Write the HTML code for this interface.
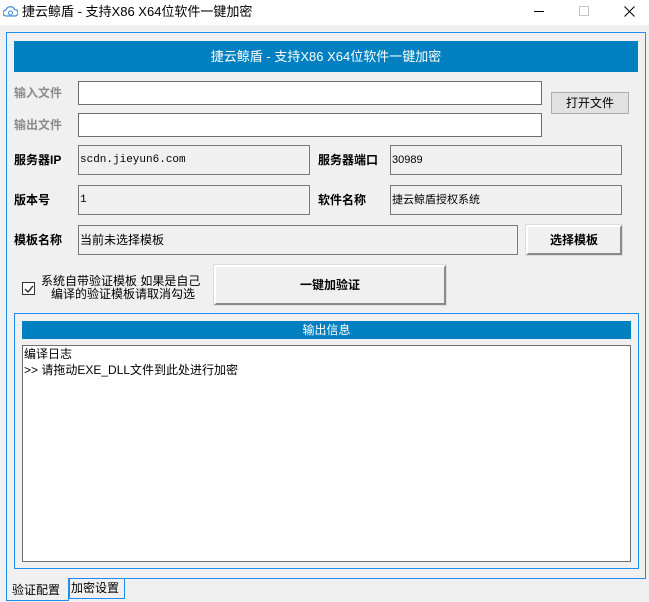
<!DOCTYPE html>
<html><head><meta charset="utf-8"><style>
*{margin:0;padding:0;box-sizing:border-box}
body{width:649px;height:602px;background:#f0f0f0;position:relative;overflow:hidden;font-family:"Liberation Sans","Noto Sans CJK SC",sans-serif;font-size:12px;color:#000}
.a{position:absolute}
.lbl{font-weight:bold;font-size:12px;line-height:14px}
.fld{border:1px solid #7a7a7a;background:#f0f0f0;font-size:11px;padding-left:1px;font-family:"Liberation Mono","Noto Sans CJK SC",monospace}
.inp{border:1px solid #6e6e6e;background:#fff}
.btn3d{background:#f0f0f0;border-top:2px solid #fff;border-left:2px solid #fff;border-right:2px solid #8a8a8a;border-bottom:2px solid #8a8a8a;outline:1px solid #dcdcdc;font-weight:bold;text-align:center}
</style></head><body>
<div class="a" style="left:0;top:0;width:649px;height:25px;background:#fff"></div>
<svg class="a" style="left:3px;top:5px" width="15" height="14" viewBox="0 0 15 14"><path d="M3 11 A3 3 0 0 1 3 5 A4.5 4.5 0 0 1 11.5 4.5 A3.2 3.2 0 0 1 12 11 Z" fill="none" stroke="#4a8fd8" stroke-width="1.3"/><circle cx="7.5" cy="8" r="2" fill="none" stroke="#4a8fd8" stroke-width="1.1"/></svg>
<div class="a" style="left:22px;top:4px;font-size:13px;line-height:16px">捷云鲸盾 - 支持X86 X64位软件一键加密</div>
<div class="a" style="left:534px;top:11px;width:10px;height:1px;background:#000"></div>
<div class="a" style="left:579px;top:6px;width:10px;height:10px;border:1px solid #c8c8c8"></div>
<svg class="a" style="left:624px;top:6px" width="11" height="11"><path d="M0.5 0.5L10.5 10.5M10.5 0.5L0.5 10.5" stroke="#000" stroke-width="1"/></svg>

<div class="a" style="left:6px;top:32px;width:640px;height:547px;border:1px solid #1e8cf0"></div>
<div class="a" style="left:14px;top:41px;width:624px;height:31px;background:#0080c0;color:#fff;text-align:center;line-height:31px;font-size:13px">捷云鲸盾 - 支持X86 X64位软件一键加密</div>

<div class="a lbl" style="left:14px;top:86px;color:#8a8a8a">输入文件</div>
<div class="a inp" style="left:78px;top:81px;width:464px;height:24px"></div>
<div class="a lbl" style="left:14px;top:118px;color:#8a8a8a">输出文件</div>
<div class="a inp" style="left:78px;top:113px;width:464px;height:24px"></div>
<div class="a" style="left:551px;top:92px;width:78px;height:22px;background:#e1e1e1;border:1px solid #adadad;text-align:center;line-height:20px">打开文件</div>

<div class="a lbl" style="left:14px;top:153px">服务器IP</div>
<div class="a fld" style="left:78px;top:145px;width:232px;height:30px;line-height:28px">scdn.jieyun6.com</div>
<div class="a lbl" style="left:318px;top:153px">服务器端口</div>
<div class="a fld" style="left:390px;top:145px;width:232px;height:30px;line-height:28px;font-family:'Liberation Sans',sans-serif">30989</div>

<div class="a lbl" style="left:14px;top:193px">版本号</div>
<div class="a fld" style="left:78px;top:185px;width:232px;height:30px;line-height:28px">1</div>
<div class="a lbl" style="left:318px;top:193px">软件名称</div>
<div class="a fld" style="left:390px;top:185px;width:232px;height:30px;line-height:28px;font-family:'Liberation Sans','Noto Sans CJK SC',sans-serif">捷云鲸盾授权系统</div>

<div class="a lbl" style="left:14px;top:233px">模板名称</div>
<div class="a fld" style="left:78px;top:225px;width:440px;height:30px;line-height:28px;font-size:12px;font-family:'Liberation Sans','Noto Sans CJK SC',sans-serif">当前未选择模板</div>
<div class="a btn3d" style="left:526px;top:225px;width:96px;height:30px;line-height:26px">选择模板</div>

<div class="a" style="left:22px;top:282px;width:13px;height:13px;border:1px solid #333;background:#fff"></div>
<svg class="a" style="left:24px;top:284px" width="10" height="10"><path d="M1 5L4 8L9 2" stroke="#333" stroke-width="1.4" fill="none"/></svg>
<div class="a" style="left:41px;top:275px;line-height:13px;font-size:12px">系统自带验证模板 如果是自己<br>&nbsp;&nbsp;&nbsp;编译的验证模板请取消勾选</div>
<div class="a btn3d" style="left:214px;top:265px;width:232px;height:40px;line-height:36px">一键加验证</div>

<div class="a" style="left:14px;top:313px;width:625px;height:256px;border:1px solid #1e8cf0"></div>
<div class="a" style="left:22px;top:321px;width:609px;height:18px;background:#0080c0;color:#fff;text-align:center;line-height:18px">输出信息</div>
<div class="a" style="left:22px;top:345px;width:609px;height:217px;background:#fff;border:1px solid #6e6e6e;line-height:16px;padding-left:1px">编译日志<br>&gt;&gt; 请拖动EXE_DLL文件到此处进行加密</div>

<div class="a" style="left:6px;top:578px;width:63px;height:23px;border:1px solid #1e8cf0;border-top:none;background:#f0f0f0"></div>
<div class="a" style="left:12px;top:582px;line-height:16px">验证配置</div>
<div class="a" style="left:69px;top:578px;width:56px;height:21px;border:1px solid #1e8cf0"></div>
<div class="a" style="left:71px;top:580px;line-height:16px">加密设置</div>
</body></html>
